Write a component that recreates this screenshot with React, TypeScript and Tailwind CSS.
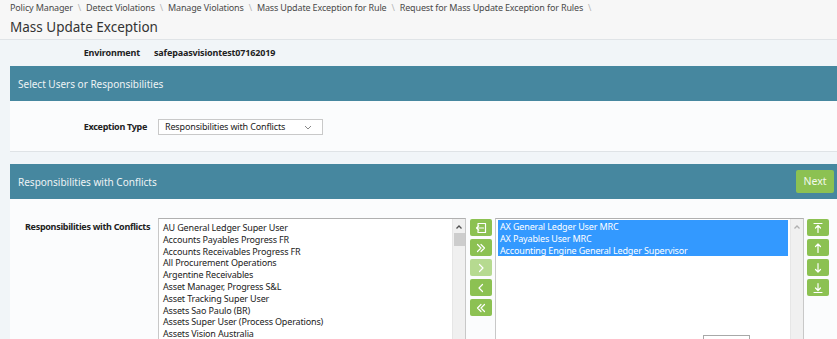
import React from 'react'

const crumbs = [
  'Policy Manager',
  'Detect Violations',
  'Manage Violations',
  'Mass Update Exception for Rule',
  'Request for Mass Update Exception for Rules',
]

const available = [
  'AU General Ledger Super User',
  'Accounts Payables Progress FR',
  'Accounts Receivables Progress FR',
  'All Procurement Operations',
  'Argentine Receivables',
  'Asset Manager, Progress S&L',
  'Asset Tracking Super User',
  'Assets Sao Paulo (BR)',
  'Assets Super User (Process Operations)',
  'Assets Vision Australia',
  'Assets Vision Brazil',
]

const selected = ['AX General Ledger User MRC', 'AX Payables User MRC', 'Accounting Engine General Ledger Supervisor']

function Icon({ kind }: { kind: string }) {
  const common = { fill: 'none', stroke: 'currentColor', strokeWidth: 1.2, strokeLinecap: 'round' as const, strokeLinejoin: 'round' as const }
  return (
    <svg width="12" height="12" viewBox="0 0 12 12" {...common}>
      {kind === 'swap' && (
        <>
          <path d="M3 3.5V1.5h7.5v9H3V8.5" />
          <path d="M8.5 6H1.5M3.8 3.8L1.5 6l2.3 2.2" />
        </>
      )}
      {kind === 'allRight' && <path d="M2.5 2.5L6 6l-3.5 3.5M6 2.5L9.5 6 6 9.5" />}
      {kind === 'right' && <path d="M4.5 2.5L8 6l-3.5 3.5" />}
      {kind === 'left' && <path d="M7.5 2.5L4 6l3.5 3.5" />}
      {kind === 'allLeft' && <path d="M6 2.5L2.5 6 6 9.5M9.5 2.5L6 6l3.5 3.5" />}
      {kind === 'top' && <path d="M2 1.5h8M6 3.5v7M3.5 6L6 3.5 8.5 6" />}
      {kind === 'up' && <path d="M6 2v8.5M3.5 4.5L6 2l2.5 2.5" />}
      {kind === 'down' && <path d="M6 1.5V10M3.5 7.5L6 10l2.5-2.5" />}
      {kind === 'bottom' && <path d="M2 10.5h8M6 1.5v7M3.5 6L6 8.5 8.5 6" />}
    </svg>
  )
}

function SideButton({ kind, disabled }: { kind: string; disabled?: boolean }) {
  return (
    <button
      className={
        'flex h-[17px] w-[22px] items-center justify-center rounded-[2px] text-white ' +
        (disabled ? 'bg-[#b6da90] text-[#f4fbe9]' : 'bg-[#8cc152]')
      }
    >
      <Icon kind={kind} />
    </button>
  )
}

function Scrollbar({ thumb }: { thumb?: boolean }) {
  return (
    <div className="flex w-[13px] shrink-0 flex-col items-center border-l border-[#e6e6e6] bg-[#f0f0f0] text-[#606060]">
      <svg width="8" height="6" viewBox="0 0 8 6" className="mt-[5px]" fill="none" stroke={thumb ? '#505050' : '#b0b0b0'} strokeWidth="1.3">
        <path d="M1.5 4.5L4 2l2.5 2.5" />
      </svg>
      {thumb && <div className="mt-[3px] h-[13px] w-[11px] bg-[#cdcdcd]" />}
      <div className="flex-1" />
      <svg width="8" height="6" viewBox="0 0 8 6" className="mb-[3px]" fill="none" stroke={thumb ? '#505050' : '#b0b0b0'} strokeWidth="1.3">
        <path d="M1.5 1.5L4 4l2.5-2.5" />
      </svg>
    </div>
  )
}

export default function App() {
  return (
    <div className="h-[339px] w-full overflow-hidden bg-[#f1f5f8] font-['Noto_Sans',sans-serif] tracking-[-0.15px] text-[#333]">
      <div className="h-[40px] border-b border-[#e0e4e7] bg-[#f7f7f7] px-[10px]">
        <div className="flex pt-[1px] text-[9px] leading-[13px] text-[#4a4a4a]">
          {crumbs.map(c => (
            <span key={c} className="whitespace-nowrap">
              {c}
              <span className="px-[5px] text-[#b5b5b5]">\</span>
            </span>
          ))}
        </div>
        <div className="mt-[3px] text-[13.5px] leading-[20px] tracking-normal text-[#333]">Mass Update Exception</div>
      </div>

      <div className="flex h-[26px] items-center text-[9px] font-bold text-[#222]">
        <div className="w-[140px] text-right">Environment</div>
        <div className="pl-[14px]">safepaasvisiontest07162019</div>
      </div>

      <div className="ml-[10px]">
        <div className="flex h-[35px] items-center bg-[#46879f] px-[8px] pt-[1px] text-[10px] tracking-normal text-[#eef3f5]">Select Users or Responsibilities</div>
        <div className="flex h-[51px] items-start border-b border-[#dfe3e6] bg-[#fbfcfd] pt-[18px]">
          <div className="w-[137px] pt-[1px] text-right text-[9px] font-bold tracking-[-0.3px] text-[#222]">Exception Type</div>
          <div className="ml-[11px] flex h-[16px] w-[165px] items-center justify-between border border-[#c9c9c9] bg-white pl-[6px] pr-[10px] text-[9px] text-[#222]">
            <span>Responsibilities with Conflicts</span>
            <svg width="8" height="5" viewBox="0 0 8 5" fill="none" stroke="#888" strokeWidth="1">
              <path d="M1 1l3 3 3-3" />
            </svg>
          </div>
        </div>

        <div className="mt-[12px] flex h-[35px] items-center justify-between bg-[#46879f] pl-[8px] pr-[3px] text-[10px] tracking-normal text-[#eef3f5]">
          <span className="pt-[1px]">Responsibilities with Conflicts</span>
          <button className="flex h-[23px] w-[38px] items-center justify-center rounded-[2px] bg-[#8cc152] text-[10.5px] text-[#f3f9ec]">Next</button>
        </div>
        <div className="flex h-[200px] bg-[#fbfcfd] pt-[19px]">
          <div className="w-[148px] shrink-0 whitespace-nowrap pl-[15px] pt-[2px] text-[9px] font-bold tracking-[-0.3px] text-[#222]">Responsibilities with Conflicts</div>
          <div className="flex h-[140px] w-[308px] shrink-0 border border-[#c8c8c8] border-t-[#b0b0b0] bg-white">
            <div className="flex-1 overflow-hidden pl-[4px] pt-[3px] text-[9px] leading-[11.8px] text-[#222]">
              {available.map(a => (
                <div key={a} className="whitespace-nowrap">{a}</div>
              ))}
            </div>
            <Scrollbar thumb />
          </div>
          <div className="ml-[4px] flex w-[22px] shrink-0 flex-col gap-[3px] pt-[1px]">
            <SideButton kind="swap" />
            <SideButton kind="allRight" />
            <SideButton kind="right" disabled />
            <SideButton kind="left" />
            <SideButton kind="allLeft" />
          </div>
          <div className="ml-[3px] flex h-[140px] w-[309px] shrink-0 border border-[#c8c8c8] border-t-[#b0b0b0] bg-white">
            <div className="relative flex-1 pl-[2px] pt-[1px] pr-[2px] text-[9px]">
              {selected.map(s => (
                <div key={s} className="h-[12px] whitespace-nowrap bg-[#3399ff] pl-[2px] leading-[14px] text-white">{s}</div>
              ))}
              <div className="absolute left-[207px] top-[116px] h-[10px] w-[47px] border border-[#a8a8a8] bg-white" />
            </div>
            <Scrollbar />
          </div>
          <div className="ml-[3px] flex w-[22px] shrink-0 flex-col gap-[3px] pt-[1px]">
            <SideButton kind="top" />
            <SideButton kind="up" />
            <SideButton kind="down" />
            <SideButton kind="bottom" />
          </div>
        </div>
      </div>
    </div>
  )
}
